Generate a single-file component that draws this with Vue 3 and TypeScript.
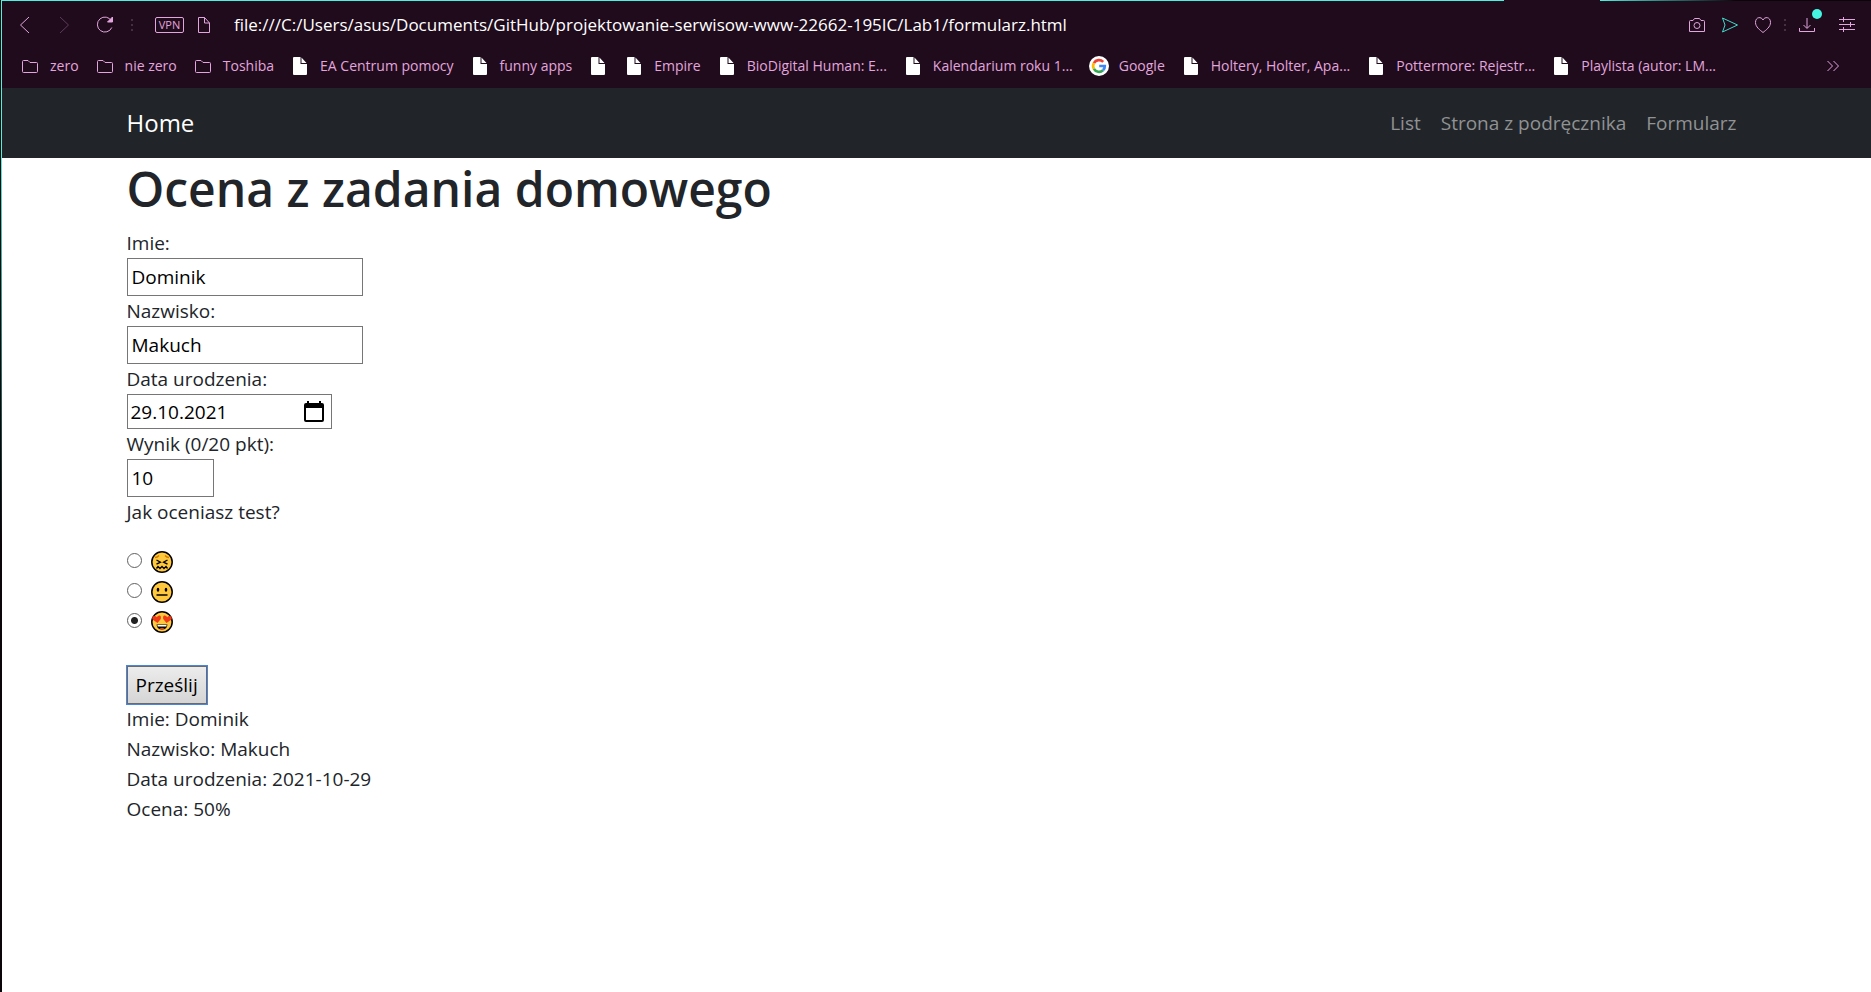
<script setup lang="ts">
import { computed, ref } from 'vue'

interface Bookmark {
  icon: 'folder' | 'file' | 'google'
  label: string
}

const bookmarks: Bookmark[] = [
  { icon: 'folder', label: 'zero' },
  { icon: 'folder', label: 'nie zero' },
  { icon: 'folder', label: 'Toshiba' },
  { icon: 'file', label: 'EA Centrum pomocy' },
  { icon: 'file', label: 'funny apps' },
  { icon: 'file', label: '' },
  { icon: 'file', label: 'Empire' },
  { icon: 'file', label: 'BioDigital Human: E...' },
  { icon: 'file', label: 'Kalendarium roku 1...' },
  { icon: 'google', label: 'Google' },
  { icon: 'file', label: 'Holtery, Holter, Apa...' },
  { icon: 'file', label: 'Pottermore: Rejestr...' },
  { icon: 'file', label: 'Playlista (autor: LM...' },
]

const links = ['List', 'Strona z podręcznika', 'Formularz']

const url = ref('file:///C:/Users/asus/Documents/GitHub/projektowanie-serwisow-www-22662-195IC/Lab1/formularz.html')
const firstName = ref('Dominik')
const lastName = ref('Makuch')
const birthDate = ref('29.10.2021')
const score = ref(10)
const rating = ref('love')

const isoDate = computed(() => birthDate.value.split('.').reverse().join('-'))
const grade = computed(() => Math.round((Number(score.value) / 20) * 100))
</script>

<template>
  <div class="window">
    <header class="chrome">
      <div class="accent"><span class="accent-main"></span><span class="accent-tab"></span><span class="accent-fade"></span></div>
      <div class="toolbar">
        <button class="tool back" aria-label="Wstecz">
          <svg width="20" height="20" viewBox="0 0 20 20"><path d="M14 2 5.500 10 14 18" /></svg>
        </button>
        <button class="tool forward" aria-label="Dalej">
          <svg width="20" height="20" viewBox="0 0 20 20"><path d="M5 2 13.500 10 5 18" /></svg>
        </button>
        <button class="tool reload" aria-label="Odśwież">
          <svg width="20" height="20" viewBox="0 0 20 20"><path d="M16.800 12.500A7.500 7.500 0 1 1 16.500 6" /><path d="M17.500 2V7H12.500Z" fill="currentColor" /></svg>
        </button>
        <span class="dots"></span>
        <button class="vpn">VPN</button>
        <svg class="page-icon" width="20" height="20" viewBox="0 0 20 20"><path d="M4.500 2.500H10.500L15.500 8V17.500H4.500ZM10.500 2.500V8H15.500" /></svg>
        <input v-model="url" class="url" type="text" aria-label="Adres" />
        <div class="actions">
          <button class="tool" aria-label="Zrzut ekranu">
            <svg width="20" height="20" viewBox="0 0 20 20"><path d="M3.500 5.500H6L7.500 3.500H12.500L14 5.500H16.500Q17.500 5.500 17.500 6.500V16.500H2.500V6.500Q2.500 5.500 3.500 5.500Z" /><circle cx="10" cy="10.500" r="3" /></svg>
          </button>
          <button class="tool send" aria-label="Wyślij">
            <svg width="20" height="20" viewBox="0 0 20 20"><path d="M2.500 3 17.500 10 2.500 17 5 10Z" /></svg>
          </button>
          <button class="tool" aria-label="Ulubione">
            <svg width="20" height="20" viewBox="0 0 20 20"><path d="M10 5C8.500 1.500 2.500 1.500 2.500 7.500C2.500 12 7 15 10 17.500C13 15 17.500 12 17.500 7.500C17.500 1.500 11.500 1.500 10 5Z" /></svg>
          </button>
          <span class="dots"></span>
          <button class="tool download" aria-label="Pobrane">
            <svg width="20" height="20" viewBox="0 0 20 20"><path d="M2.500 13V16.500H17.500V13M10 3V13M6.500 10 10 13.500 13.500 10" /></svg>
            <span class="badge"></span>
          </button>
          <button class="tool" aria-label="Ustawienia">
            <svg width="20" height="20" viewBox="0 0 20 20"><path d="M2 4.500H18M2 9.500H18M2 14.500H18M6.500 2V7M13.500 7V12M6.500 12V17" /></svg>
          </button>
        </div>
      </div>
      <nav class="bookmarks" aria-label="Zakładki">
        <a v-for="(item, i) in bookmarks" :key="i" class="bookmark" href="#" :aria-label="item.label || 'Zakładka'">
          <svg v-if="item.icon === 'folder'" class="folder" width="20" height="20" viewBox="0 0 20 20"><path d="M3.500 4.500H8L10 6.500H16.500Q17.500 6.500 17.500 7.500V15.500Q17.500 16.500 16.500 16.500H3.500Q2.500 16.500 2.500 15.500V5.500Q2.500 4.500 3.500 4.500Z" /></svg>
          <svg v-else-if="item.icon === 'file'" width="20" height="20" viewBox="0 0 20 20"><path d="M4 1H10.500V8H17V18Q17 19 16 19H4Q3 19 3 18V2Q3 1 4 1ZM11.500 1.500 16.500 7H11.500Z" fill="#fff" /></svg>
          <svg v-else width="20" height="20" viewBox="0 0 20 20">
            <circle cx="10" cy="10" r="10" fill="#fff" />
            <g fill="none" stroke-width="2.700">
              <path d="M4.900 7.100A5.900 5.900 0 0 1 14.200 5.900" stroke="#ea4335" />
              <path d="M4.900 12.900A5.900 5.900 0 0 1 4.900 7.100" stroke="#fbbc05" />
              <path d="M14 14.300A5.900 5.900 0 0 1 4.900 12.900" stroke="#34a853" />
              <path d="M10.200 10H15.800A5.900 5.900 0 0 1 14 14.300" stroke="#4285f4" />
            </g>
          </svg>
          <span v-if="item.label" class="bookmark-label">{{ item.label }}</span>
        </a>
        <button class="tool more" aria-label="Więcej zakładek">
          <svg width="20" height="20" viewBox="0 0 20 20"><path d="M4.500 5 9.500 10 4.500 15M10.500 5 15.500 10 10.500 15" /></svg>
        </button>
      </nav>
    </header>

    <nav class="navbar" aria-label="Menu">
      <div class="container navbar-row">
        <a class="brand" href="#">Home</a>
        <div class="nav-links">
          <a v-for="link in links" :key="link" class="nav-link" href="#">{{ link }}</a>
        </div>
      </div>
    </nav>

    <main class="container">
      <h1>Ocena z zadania domowego</h1>
      <form @submit.prevent>
        <label for="first">Imie:</label>
        <input id="first" v-model="firstName" class="field" type="text" />
        <label for="last">Nazwisko:</label>
        <input id="last" v-model="lastName" class="field" type="text" />
        <label for="birth">Data urodzenia:</label>
        <div class="date">
          <input id="birth" v-model="birthDate" type="text" />
          <button type="button" class="calendar" aria-label="Wybierz datę">
            <svg width="20" height="21" viewBox="0 0 20 21"><path fill-rule="evenodd" d="M3 0H5V2H15V0H17V2H18Q20 2 20 4V19Q20 21 18 21H2Q0 21 0 19V4Q0 2 2 2H3ZM2 7V19H18V7Z" /></svg>
          </button>
        </div>
        <label for="score">Wynik (0/20 pkt):</label>
        <input id="score" v-model="score" class="field score" type="number" min="0" max="20" />
        <fieldset>
          <legend>Jak oceniasz test?</legend>
          <label class="choice">
            <input v-model="rating" type="radio" name="rating" value="bad" aria-label="Źle" />
            <svg width="22" height="22" viewBox="0 0 22 22">
              <circle cx="11" cy="11" r="10.200" fill="#ffc83d" stroke="#000" stroke-width="1.500" />
              <path d="M4 6.500Q6.500 6.500 8 4.500M18 6.500Q15.500 6.500 14 4.500" fill="none" stroke="#d67d00" stroke-width="1.300" />
              <path d="M5.500 9 9.500 11.200 5.500 13.200M16.500 9 12.500 11.200 16.500 13.200M5.500 17.500 7 15.500 9 17.500 11 15.500 13 17.500 15 15.500 16.500 17.500" fill="none" stroke="#000" stroke-width="1.300" />
            </svg>
          </label>
          <label class="choice">
            <input v-model="rating" type="radio" name="rating" value="ok" aria-label="Średnio" />
            <svg width="22" height="22" viewBox="0 0 22 22">
              <circle cx="11" cy="11" r="10.200" fill="#ffc83d" stroke="#000" stroke-width="1.500" />
              <ellipse cx="7" cy="8.800" rx="1.300" ry="2" /><ellipse cx="15" cy="8.800" rx="1.300" ry="2" />
              <path d="M5.500 14H16.500" stroke="#000" stroke-width="1.500" />
            </svg>
          </label>
          <label class="choice">
            <input v-model="rating" type="radio" name="rating" value="love" aria-label="Świetnie" />
            <svg width="22" height="22" viewBox="0 0 22 22">
              <circle cx="11" cy="11" r="10.200" fill="#ffc83d" stroke="#000" stroke-width="1.500" />
              <path d="M6.500 12 1.500 8.500Q0.500 5 3.500 5Q5 5 5.800 6.300Q7 4 9 4.600Q10.500 5.500 9.800 8Z" fill="#f03a17" />
              <path d="M15.500 12 20.500 8.500Q21.500 5 18.500 5Q17 5 16.200 6.300Q15 4 13 4.600Q11.500 5.500 12.200 8Z" fill="#f03a17" />
              <path d="M5.500 13.500H16.500Q16 18.500 11 18.500Q6 18.500 5.500 13.500Z" />
              <path d="M6.500 14H15.500V15.500H6.500Z" fill="#fff" />
              <path d="M8.500 17.500Q11 15.800 13.500 17.500Q11 18.800 8.500 17.500Z" fill="#f03a17" />
            </svg>
          </label>
        </fieldset>
        <button class="submit" type="submit">Prześlij</button>
      </form>
      <output class="result">
        <span>Imie: {{ firstName }}</span>
        <span>Nazwisko: {{ lastName }}</span>
        <span>Data urodzenia: {{ isoDate }}</span>
        <span>Ocena: {{ grade }}%</span>
      </output>
    </main>
  </div>
</template>

<style>
body {
  margin: 0;
  background: #fff;
}
</style>

<style scoped>
.window,
.window * {
  box-sizing: border-box;
}

.window {
  min-height: 100vh;
  padding-left: 2px;
  background:
    linear-gradient(#0b050a, #0b050a) 0 0 / 1px 100% no-repeat,
    linear-gradient(#45f5e1 16%, #0b050a 55%) 1px 0 / 1px 100% no-repeat,
    #fff;
  color: #212529;
  font-family: 'Segoe UI', 'Open Sans', 'Noto Sans', sans-serif;
  font-size: 19px;
  line-height: 30px;
}

button {
  padding: 0;
  border: 0;
  background: none;
  color: inherit;
  font: inherit;
}

svg {
  display: block;
  flex: none;
}

.chrome {
  height: 88px;
  background: #1f0b1c;
  color: #e3a5dd;
}

.accent {
  display: flex;
  height: 1px;
}

.accent-main {
  flex: 1504;
  background: #45f5e1;
}

.accent-tab {
  flex: 96;
}

.accent-fade {
  flex: 271;
  background: linear-gradient(to right, #45f5e1, #0b050a 50%);
}

.toolbar {
  display: flex;
  align-items: center;
  height: 47px;
  padding: 0 14px 0 13px;
}

.tool svg,
.folder,
.page-icon {
  fill: none;
  stroke: currentColor;
}

.forward {
  margin-left: 20px;
  color: #5f3a5b;
}

.reload {
  margin-left: 20px;
}

.dots {
  width: 2px;
  height: 12px;
  background: repeating-linear-gradient(#45303f 0 2px, transparent 2px 5px);
}

.reload + .dots {
  margin-left: 16px;
}

.vpn {
  width: 29px;
  height: 16px;
  margin-left: 22px;
  border: 1px solid;
  border-radius: 2px;
  font-size: 11px;
  line-height: 14px;
}

.page-icon {
  margin-left: 10px;
}

.url {
  flex: 1;
  min-width: 0;
  margin-left: 20px;
  padding: 0;
  border: 0;
  outline: 0;
  background: none;
  color: #fff;
  font: 17px/24px 'Segoe UI', 'Open Sans', 'Noto Sans', sans-serif;
}

.actions {
  display: flex;
  align-items: center;
  gap: 13px;
}

.actions .dots {
  margin: 0 -2px;
}

.send {
  color: #3edccb;
}

.download {
  position: relative;
}

.actions .tool:last-child {
  margin-left: 7px;
}

.badge {
  position: absolute;
  top: -6px;
  right: -5px;
  width: 10px;
  height: 10px;
  border-radius: 50%;
  background: #45f5e1;
}

.bookmarks {
  display: flex;
  align-items: center;
  gap: 16px;
  height: 36px;
  padding: 0 28px 0 18px;
  font-size: 14px;
  line-height: 20px;
}

.bookmark {
  display: flex;
  align-items: center;
  gap: 10px;
  color: inherit;
  text-decoration: none;
  white-space: nowrap;
}

.more {
  margin-left: auto;
}

.container {
  width: 100%;
  max-width: 1650px;
  margin: 0 auto;
  padding: 0 15px;
}

.navbar {
  padding: 10px 0;
  background: #212529;
}

.navbar-row {
  display: flex;
  align-items: center;
  justify-content: space-between;
}

.brand {
  color: #fff;
  font-size: 24px;
  line-height: 50px;
  text-decoration: none;
}

.nav-links {
  display: flex;
}

.nav-link {
  padding: 10px;
  color: #909294;
  text-decoration: none;
}

h1 {
  margin: 0 0 8px;
  font-size: 48px;
  font-weight: 600;
  line-height: 62px;
}

form {
  display: flex;
  flex-direction: column;
  align-items: flex-start;
}

.field,
.date {
  width: 236px;
  height: 38px;
  padding: 0 4px;
  border: 1px solid #767676;
  background: #fff;
  color: #000;
  font: inherit;
}

.score {
  width: 87px;
  appearance: textfield;
}

.score::-webkit-inner-spin-button {
  display: none;
}

.date {
  display: flex;
  align-items: center;
  width: 205px;
  height: 35px;
  padding: 0 7px 0 3px;
}

.date input {
  flex: 1;
  min-width: 0;
  padding: 0;
  border: 0;
  outline: 0;
  font: inherit;
}

fieldset {
  margin: 0;
  padding: 0;
  border: 0;
}

legend {
  margin-bottom: 20px;
  padding: 0;
}

.choice {
  display: flex;
  align-items: center;
  gap: 9px;
  height: 30px;
}

.choice input {
  appearance: none;
  width: 15px;
  height: 15px;
  margin: 0 0 3px;
  border: 1px solid #606060;
  border-radius: 50%;
  background: #fff;
}

.choice input:checked {
  background: radial-gradient(circle, #222 3px, #fff 4px);
}

.submit {
  height: 38px;
  margin-top: 29px;
  padding: 0 8px;
  border: 1px solid #6b6b6b;
  outline: 1px solid #4a86dd;
  background: linear-gradient(#ececec, #d5d5d5);
  color: #000;
}

.result {
  display: flex;
  flex-direction: column;
}
</style>
